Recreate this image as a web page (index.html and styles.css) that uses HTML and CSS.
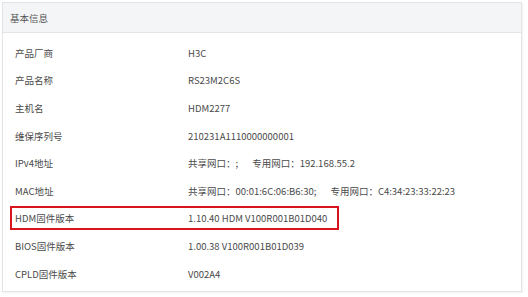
FILE: index.html
```html
<!DOCTYPE html>
<html lang="zh-CN">
<head>
<meta charset="utf-8">
<link rel="stylesheet" href="styles.css">
</head>
<body>
<div class="panel">
  <div class="panel-head">基本信息</div>
  <div class="panel-body">
    <div class="row"><div class="label">产品厂商</div><div class="value">H3C</div></div>
    <div class="row"><div class="label">产品名称</div><div class="value">RS23M2C6S</div></div>
    <div class="row"><div class="label">主机名</div><div class="value">HDM2277</div></div>
    <div class="row"><div class="label">维保序列号</div><div class="value">210231A1110000000001</div></div>
    <div class="row"><div class="label">IPv4地址</div><div class="value">共享网口：;<span class="gap"></span>专用网口：192.168.55.2</div></div>
    <div class="row"><div class="label">MAC地址</div><div class="value">共享网口：00:01:6C:06:B6:30;<span class="gap"></span>专用网口：C4:34:23:33:22:23</div></div>
    <div class="row marked"><div class="label">HDM固件版本</div><div class="value">1.10.40 HDM V100R001B01D040</div></div>
    <div class="row"><div class="label">BIOS固件版本</div><div class="value">1.00.38 V100R001B01D039</div></div>
    <div class="row"><div class="label">CPLD固件版本</div><div class="value">V002A4</div></div>
  </div>
</div>
</body>
</html>
```
FILE: styles.css
```css
html, body {
  margin: 0;
  padding: 0;
  background: #ffffff;
}
body {
  width: 528px;
  height: 297px;
  overflow: hidden;
  font-family: "Noto Sans CJK SC", "Noto Sans", sans-serif;
  font-size: 9.5px;
  color: #4a4a4a;
}
.panel {
  margin: 2px 0 0 2px;
  width: 520px;
  height: 290px;
  border: 1px solid #e2e4e8;
  box-sizing: border-box;
  box-shadow: 1px 1px 2px rgba(0,0,0,0.06);
}
.panel-head {
  height: 30px;
  box-sizing: border-box;
  background: #f4f5f7;
  border-bottom: 1px solid #e2e4e8;
  display: flex;
  align-items: center;
  padding-left: 7px;
  color: #555;
}
.panel-body {
  padding-top: 6px;
}
.row {
  position: relative;
  height: 27.6px;
  display: flex;
  align-items: center;
}
.label {
  width: 173px;
  padding-left: 12px;
  flex: none;
}
.value {
  white-space: nowrap;
}
.gap {
  display: inline-block;
  width: 14px;
}
.marked::after {
  content: "";
  position: absolute;
  left: 7px;
  width: 329px;
  top: 1px;
  bottom: 2px;
  border: 2px solid #d9141e;
  box-sizing: border-box;
}
```
